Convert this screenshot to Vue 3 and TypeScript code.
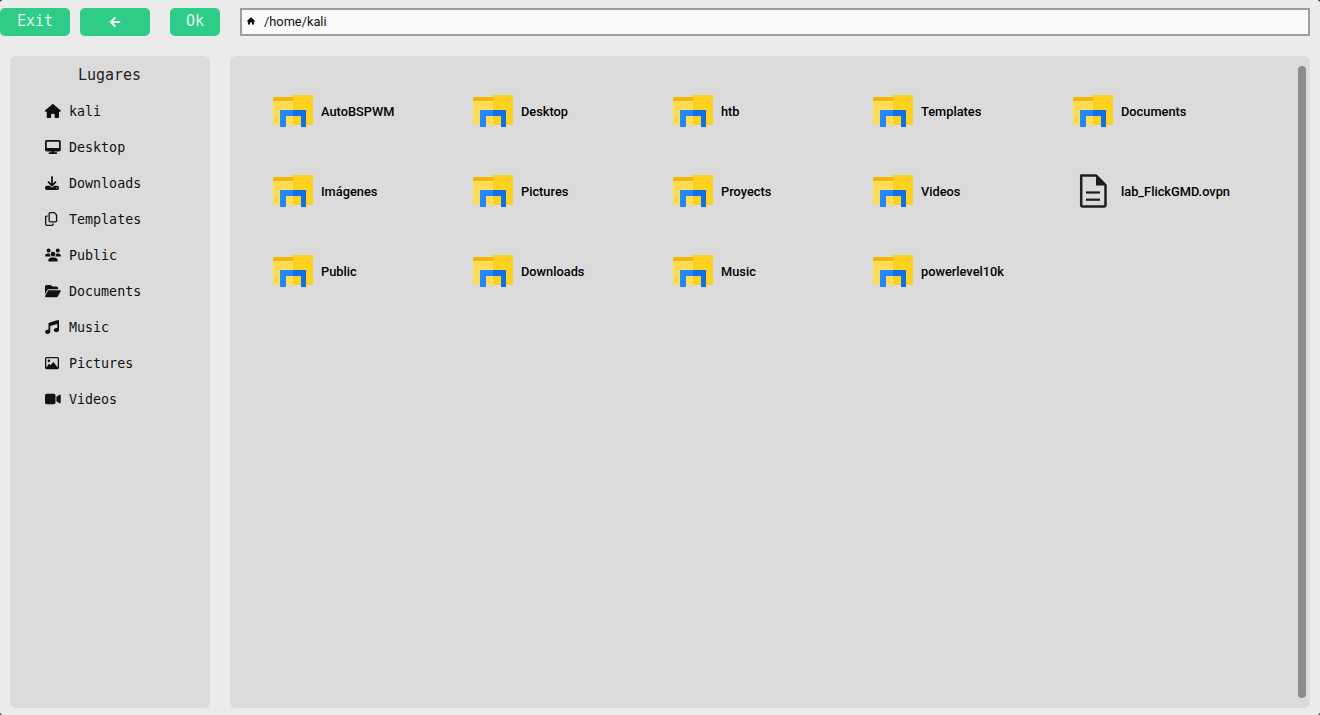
<template>
  <div class="window">
    <header class="toolbar">
      <button class="btn btn-exit">Exit</button>
      <button class="btn btn-back">
        <svg viewBox="0 0 448 512" width="12" height="12"><path fill="#fff" d="M257.500 445.100l-22.200 22.200c-9.400 9.400-24.600 9.400-33.900 0L7 273c-9.400-9.400-9.400-24.600 0-33.900L201.400 44.700c9.400-9.400 24.600-9.400 33.900 0l22.200 22.200c9.500 9.500 9.300 25-.4 34.300L136.600 216H424c13.300 0 24 10.700 24 24v32c0 13.300-10.700 24-24 24H136.600l120.500 114.800c9.800 9.300 10 24.800.4 34.300z"/></svg>
      </button>
      <button class="btn btn-ok">Ok</button>
      <div class="address">
        <svg viewBox="0 0 576 512" width="8" height="8"><path fill="currentColor" :d="housePath"/></svg>
        <span>/home/kali</span>
      </div>
    </header>

    <div class="body">
      <aside class="places">
        <h2 class="places-title">Lugares</h2>
        <ul class="places-list">
          <li v-for="place in places" :key="place.name" class="place">
            <svg :viewBox="place.box" preserveAspectRatio="xMinYMid meet" width="16" height="14" class="place-icon"><path fill="currentColor" :d="place.d" /></svg>
            <span>{{ place.name }}</span>
          </li>
        </ul>
      </aside>

      <main class="files">
        <div class="grid">
          <div v-for="file in files" :key="file.name" class="file">
            <svg v-if="file.kind === 'folder'" class="file-icon" viewBox="0 0 40 32" width="40" height="32">
              <path fill="#f2b600" d="M0 3.500C0 2.700.7 2 1.500 2H20v5H0z" />
              <path fill="#ffdc55" d="M0 6h20v24H2a2 2 0 0 1-2-2z" />
              <path fill="#ffd11f" d="M20 1C20 .4 20.400 0 21 0h19v30H20z" />
              <path fill="#2188ff" d="M7 15h13v6h-7v11H7z" />
              <path fill="#0f6fe8" d="M20 15h13v17h-5V21h-8z" />
            </svg>
            <svg v-else class="file-icon" viewBox="0 0 40 32" width="40" height="32">
              <path fill="none" stroke="#1f1f1f" stroke-width="2.500" stroke-linejoin="round" d="M8.200 .6h15l9.300 9.600v19.700a1.500 1.500 0 0 1-1.500 1.500H9.700a1.500 1.500 0 0 1-1.500-1.500z" />
              <path fill="#1f1f1f" d="M23 .6l9.800 9.800H23z" />
              <rect x="13" y="16.400" width="14" height="2.200" fill="#1f1f1f" />
              <rect x="13" y="23.600" width="14" height="2.200" fill="#1f1f1f" />
            </svg>
            <span class="file-name">{{ file.name }}</span>
          </div>
        </div>
        <div class="scroll-thumb"></div>
      </main>
    </div>
  </div>
</template>

<script setup lang="ts">
interface Place {
  name: string
  box: string
  d: string
}

interface FileItem {
  name: string
  kind: 'folder' | 'doc'
}

const housePath =
  'M575.800 255.500c0 18-15 32.100-32 32.100h-32l.7 160.200c0 2.700-.2 5.400-.5 8.100V472c0 22.100-17.900 40-40 40H456c-1.100 0-2.200 0-3.300-.1c-1.400 .1-2.800 .1-4.200 .1H416 392c-22.100 0-40-17.900-40-40V448 384c0-17.700-14.300-32-32-32H256c-17.700 0-32 14.300-32 32v64 24c0 22.100-17.900 40-40 40H160 128.100c-1.500 0-3-.1-4.500-.2c-1.200 .1-2.400 .2-3.600 .2H104c-22.100 0-40-17.900-40-40V360c0-.9 0-1.900 .1-2.800V287.600H32c-18 0-32-14-32-32.100c0-9 3-17 10-24L266.400 8c7-7 15-8 22-8s15 2 21 7L564.800 231.500c8 7 12 15 11 24z'

const places: Place[] = [
  { name: 'kali', box: '0 0 576 512', d: housePath },
  { name: 'Desktop', box: '0 0 576 512', d: 'M64 0C28.700 0 0 28.700 0 64V352c0 35.300 28.700 64 64 64H240l-10.700 32H160c-17.700 0-32 14.300-32 32s14.300 32 32 32H416c17.700 0 32-14.300 32-32s-14.300-32-32-32H346.700L336 416H512c35.300 0 64-28.700 64-64V64c0-35.300-28.700-64-64-64H64zM512 64V288H64V64H512z' },
  { name: 'Downloads', box: '0 0 512 512', d: 'M288 32c0-17.700-14.300-32-32-32s-32 14.300-32 32V274.700l-73.400-73.400c-12.500-12.500-32.800-12.500-45.300 0s-12.500 32.800 0 45.300l128 128c12.500 12.500 32.800 12.500 45.300 0l128-128c12.500-12.500 12.500-32.800 0-45.300s-32.800-12.500-45.300 0L288 274.700V32zM64 352c-35.300 0-64 28.700-64 64v32c0 35.300 28.700 64 64 64H448c35.300 0 64-28.700 64-64V416c0-35.300-28.700-64-64-64H346.500l-45.300 45.300c-25 25-65.500 25-90.500 0L165.500 352H64zm368 56a24 24 0 1 1 0 48 24 24 0 1 1 0-48z' },
  { name: 'Templates', box: '0 0 448 512', d: 'M384 336H192c-8.800 0-16-7.200-16-16V64c0-8.800 7.200-16 16-16l140.100 0L400 115.900V320c0 8.800-7.200 16-16 16zM192 384H384c35.300 0 64-28.700 64-64V115.900c0-12.700-5.100-24.900-14.100-33.900L366.100 14.100c-9-9-21.200-14.100-33.900-14.100H192c-35.300 0-64 28.700-64 64V320c0 35.300 28.700 64 64 64zM64 128c-35.300 0-64 28.700-64 64V448c0 35.300 28.700 64 64 64H256c35.300 0 64-28.700 64-64V416H272v32c0 8.800-7.200 16-16 16H64c-8.800 0-16-7.200-16-16V192c0-8.800 7.200-16 16-16H96V128H64z' },
  { name: 'Public', box: '0 0 640 512', d: 'M144 0a80 80 0 1 1 0 160A80 80 0 1 1 144 0zM512 0a80 80 0 1 1 0 160A80 80 0 1 1 512 0zM0 298.700C0 239.800 47.800 192 106.700 192h42.700c15.900 0 31 3.500 44.600 9.700c-1.300 7.200-1.900 14.700-1.900 22.300c0 38.200 16.800 72.500 43.300 96c-.2 0-.4 0-.7 0H21.300C9.600 320 0 310.400 0 298.700zM405.300 320c-.2 0-.4 0-.7 0c26.600-23.500 43.300-57.800 43.300-96c0-7.600-.7-15-1.900-22.300c13.600-6.300 28.700-9.700 44.600-9.700h42.700C592.200 192 640 239.800 640 298.700c0 11.800-9.600 21.300-21.300 21.300H405.300zM224 224a96 96 0 1 1 192 0 96 96 0 1 1 -192 0zM128 485.300C128 411.700 187.700 352 261.300 352H378.700C452.300 352 512 411.700 512 485.300c0 14.700-11.900 26.700-26.700 26.700H154.700c-14.700 0-26.700-11.900-26.700-26.700z' },
  { name: 'Documents', box: '0 0 576 512', d: 'M88.700 223.800L0 375.800V96C0 60.700 28.700 32 64 32H181.500c17 0 33.300 6.700 45.300 18.700l26.500 26.500c12 12 28.300 18.700 45.300 18.700H416c35.300 0 64 28.700 64 64v32H144c-22.800 0-43.800 12.100-55.300 31.800zm27.600 16.100C122.100 230 132.600 224 144 224H544c11.500 0 22 6.100 27.700 16.100s5.700 22.200-.1 32.100l-112 192C453.900 474 443.400 480 432 480H32c-11.500 0-22-6.100-27.700-16.100s-5.700-22.200 .1-32.100l112-192z' },
  { name: 'Music', box: '0 0 512 512', d: 'M499.100 6.300c8.100 6 12.900 15.600 12.900 25.700v72V368c0 44.200-43 80-96 80s-96-35.800-96-80s43-80 96-80c11.200 0 22 1.600 32 4.600V147L192 223.800V432c0 44.200-43 80-96 80s-96-35.800-96-80s43-80 96-80c11.200 0 22 1.600 32 4.600V200 128c0-14.100 9.300-26.600 22.800-30.700l320-96c9.700-2.900 20.200-1.100 28.300 5z' },
  { name: 'Pictures', box: '0 0 512 512', d: 'M448 80c8.800 0 16 7.200 16 16V415.800l-5-6.500-136-176c-4.500-5.900-11.600-9.300-19-9.300s-14.400 3.400-19 9.300L202 340.700l-30.500-42.700C167 291.700 159.800 288 152 288s-15 3.700-19.500 10.100l-80 112L48 416.300l0-.3V96c0-8.800 7.200-16 16-16H448zM64 32C28.700 32 0 60.700 0 96V416c0 35.300 28.700 64 64 64H448c35.300 0 64-28.700 64-64V96c0-35.300-28.700-64-64-64H64zm80 192a48 48 0 1 0 0-96 48 48 0 1 0 0 96z' },
  { name: 'Videos', box: '0 0 576 512', d: 'M0 128C0 92.700 28.700 64 64 64H320c35.300 0 64 28.700 64 64V384c0 35.300-28.700 64-64 64H64c-35.300 0-64-28.700-64-64V128zM559.100 99.800c10.400 5.600 16.900 16.400 16.900 28.200V384c0 11.800-6.500 22.600-16.900 28.200s-23 5-32.900-1.600l-96-64L416 337.100V320 192 174.900l14.200-9.500 96-64c9.800-6.500 22.400-7.200 32.900-1.600z' },
]

const files: FileItem[] = [
  { name: 'AutoBSPWM', kind: 'folder' },
  { name: 'Desktop', kind: 'folder' },
  { name: 'htb', kind: 'folder' },
  { name: 'Templates', kind: 'folder' },
  { name: 'Documents', kind: 'folder' },
  { name: 'Imágenes', kind: 'folder' },
  { name: 'Pictures', kind: 'folder' },
  { name: 'Proyects', kind: 'folder' },
  { name: 'Videos', kind: 'folder' },
  { name: 'lab_FlickGMD.ovpn', kind: 'doc' },
  { name: 'Public', kind: 'folder' },
  { name: 'Downloads', kind: 'folder' },
  { name: 'Music', kind: 'folder' },
  { name: 'powerlevel10k', kind: 'folder' },
]
</script>

<style>
html,
body {
  margin: 0;
  background: #1a1a1a;
  overflow: hidden;
}
</style>

<style scoped>
.window {
  width: 1320px;
  height: 715px;
  box-sizing: border-box;
  padding: 8px 10px 7px 0;
  background: #ebebeb;
  border-radius: 3px;
  display: flex;
  flex-direction: column;
  gap: 20px;
}

.toolbar {
  display: flex;
  height: 28px;
  flex: none;
}

.btn {
  height: 28px;
  border: 0;
  padding: 0 0 2px;
  border-radius: 5px;
  background: #2ecc87;
  color: rgba(255, 255, 255, 0.88);
  font-family: "DejaVu Sans Mono", monospace;
  font-size: 15px;
  display: flex;
  align-items: center;
  justify-content: center;
}

.btn-exit {
  width: 70px;
}

.btn-back {
  width: 70px;
  margin-left: 10px;
  padding-bottom: 0;
}

.btn-ok {
  width: 50px;
  margin-left: 20px;
}

.address {
  flex: 1;
  margin-left: 20px;
  box-sizing: border-box;
  border: 2px solid #9a9ea3;
  background: #fafafa;
  display: flex;
  align-items: center;
  padding: 0 0 2px 5px;
  gap: 9px;
  font-family: Roboto, sans-serif;
  font-size: 12.8px;
  color: #111;
}

.body {
  flex: 1;
  min-height: 0;
  display: flex;
  gap: 20px;
  padding-left: 10px;
}

.places {
  width: 200px;
  flex: none;
  background: #dbdbdb;
  border-radius: 6px;
  font-family: "DejaVu Sans Mono", monospace;
  color: #111;
}

.places-title {
  margin: 0;
  padding: 10px 1px 0 0;
  text-align: center;
  font-size: 15px;
  line-height: 18px;
  font-weight: 400;
  color: #222;
}

.places-list {
  list-style: none;
  margin: 9px 0 0;
  padding: 0 0 0 35px;
}

.place {
  height: 36px;
  display: flex;
  align-items: center;
  gap: 8px;
  font-size: 13.33px;
}

.place-icon {
  flex: none;
}

.files {
  flex: 1;
  position: relative;
  background: #dbdbdb;
  border-radius: 6px;
  padding: 15px 0 0 30px;
}

.grid {
  display: grid;
  grid-template-columns: repeat(5, 200px);
  grid-auto-rows: 80px;
}

.file {
  display: flex;
  align-items: center;
  padding-left: 13px;
  gap: 8px;
}

.file-icon {
  flex: none;
  overflow: visible;
}

.file-name {
  font-family: Roboto, sans-serif;
  font-size: 12.8px;
  font-weight: 500;
  color: #000;
}

.scroll-thumb {
  position: absolute;
  top: 10px;
  bottom: 10px;
  right: 4px;
  width: 8px;
  border-radius: 4px;
  background: #8c8c8c;
}
</style>
